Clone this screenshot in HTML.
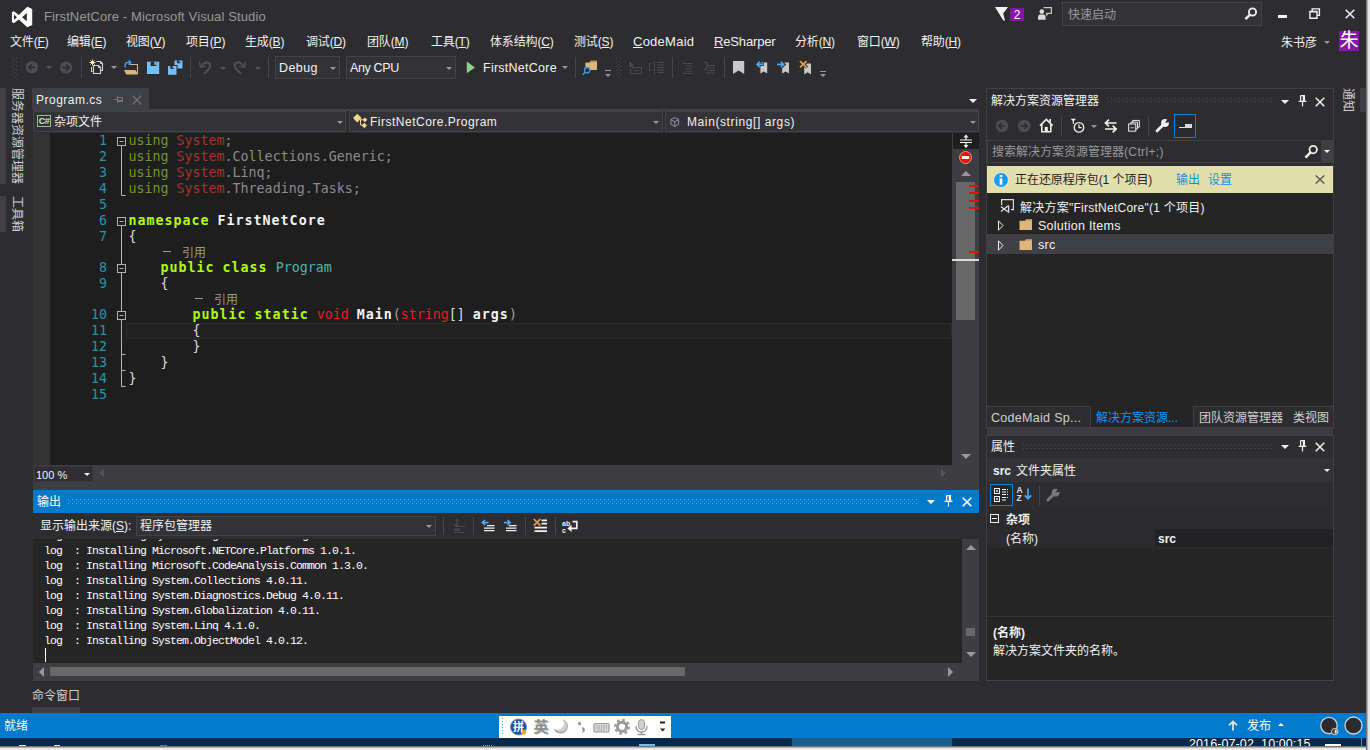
<!DOCTYPE html>
<html lang="zh-CN">
<head>
<meta charset="utf-8">
<title>FirstNetCore - Microsoft Visual Studio</title>
<style>
*{box-sizing:border-box;margin:0;padding:0}
html,body{width:1370px;height:750px;overflow:hidden;background:#2d2d30}
body{position:relative;font-family:"Liberation Sans","Noto Sans CJK SC",sans-serif;font-size:12px;color:#f1f1f1;line-height:1}
.a{position:absolute}
.t{position:absolute;white-space:nowrap;line-height:16px;height:16px}
u{text-decoration:underline;text-underline-offset:1px}
svg{position:absolute;overflow:visible}
.mono{font-family:"DejaVu Sans Mono","Noto Sans CJK SC",monospace}
.out{font-family:"Liberation Mono","Noto Sans CJK SC",monospace}
.combo{position:absolute;background:#333337;border:1px solid #434346}
.dd{position:absolute;width:0;height:0;border-left:3px solid transparent;border-right:3px solid transparent;border-top:3px solid #999}
.grip{position:absolute;height:5px;background-image:radial-gradient(circle at 0.5px 0.5px,#46464a 0.6px,transparent 0.7px),radial-gradient(circle at 2.5px 2.5px,#46464a 0.6px,transparent 0.7px);background-size:4px 4px}
.m{top:34px;letter-spacing:-0.15px}
.sep{position:absolute;top:57px;width:1px;height:21px;background:#46464a}
.vgrip{background-image:radial-gradient(circle at 1px 1px,#46464a 0.7px,transparent 0.9px),radial-gradient(circle at 3px 3px,#46464a 0.7px,transparent 0.9px);background-size:4px 4px}
.vt{transform-origin:0 0;transform:rotate(90deg);color:#d0d0d0}
.ln{left:51px;width:56px;text-align:right;color:#2b91af;font-size:13.3px}
.cd{left:128.5px;font-size:13.3px;color:#dcdcdc;white-space:pre}
.cd b,.cd .k{font-weight:bold;letter-spacing:1px}
.k{color:#b1fa18}.w{color:#f4f4f4}.ku{color:#6f972b}.nu{color:#a83232}.g{color:#8c8c8c}.r{color:#e02020}.ty{color:#4fb4ae}.p{color:#a4a4a4}
.cl{color:#999;font-size:12px;font-family:"DejaVu Sans Mono","Noto Sans CJK SC",monospace}
.gb{background-image:radial-gradient(circle at 0.5px 0.5px,#5fb0e6 0.6px,transparent 0.7px),radial-gradient(circle at 2.5px 2.5px,#5fb0e6 0.6px,transparent 0.7px)}
.ol{left:11px;font-size:11.5px;letter-spacing:-0.9px;color:#fff;line-height:15px;height:15px;white-space:pre}
</style>
</head>
<body>
<svg width="0" height="0" style="left:0;top:0"><defs>
<pattern id="pg" width="4" height="4" patternUnits="userSpaceOnUse"><rect x="0" y="0" width="1" height="1" fill="#4a4a50"/><rect x="2" y="2" width="1" height="1" fill="#4a4a50"/></pattern>
<pattern id="pb" width="4" height="4" patternUnits="userSpaceOnUse"><rect x="0" y="0" width="1" height="1" fill="#59a8de"/><rect x="2" y="2" width="1" height="1" fill="#59a8de"/></pattern>
</defs></svg>
<!-- SECTION:TITLE -->
<svg class="a" style="left:0;top:0" width="40" height="32" viewBox="0 0 40 32"><path fill="#fff" fill-rule="evenodd" d="M27.300,6.800 L32.200,9 L32.200,25.100 L27.300,27.300 L18.900,19.400 L13.800,23.200 L11.900,22.100 L11.900,12.300 L13.800,11.200 L18.900,15 Z M26.800,13 L22.100,17.150 L26.800,21.300 Z M14,14.500 L16.900,17.200 L14,19.900 Z"/></svg>
<div class="t" id="ttl" style="left:44px;top:9px;font-size:13px;color:#999;letter-spacing:0.12px">FirstNetCore - Microsoft Visual Studio</div>
<!-- flag + badge -->
<svg style="left:994px;top:6px" width="16" height="16" viewBox="0 0 16 16"><path fill="#f1f1f1" d="M1,1 L14,1 L9.2,7.5 L11,14.5 L9.3,14.5 Z"/></svg>
<div class="a" style="left:1010px;top:8px;width:14px;height:13px;background:#8417a8"></div>
<div class="t" style="left:1010px;top:7px;width:14px;text-align:center;font-size:12px;color:#fff">2</div>
<svg style="left:1037px;top:6px" width="18" height="16" viewBox="0 0 18 16"><path fill="none" stroke="#c8c8c8" stroke-width="1.2" d="M6.5,1.6 H14.4 V7.4 H11.2 L9.8,9 V7.4 H9"/><circle cx="4.8" cy="5.6" r="2.3" fill="#dcdcdc"/><path fill="#dcdcdc" d="M1,13.8 V11 Q1,8.6 3.4,8.6 H6.2 Q8.6,8.6 8.6,11 V13.8 Z"/></svg>
<div class="a" style="left:1062px;top:2px;width:200px;height:24px;background:#333337;border:1px solid #434346"></div>
<div class="t" style="left:1068px;top:7px;color:#999">快速启动</div>
<svg style="left:1243px;top:6px" width="16" height="16" viewBox="0 0 16 16"><circle cx="9.5" cy="6" r="3.6" fill="none" stroke="#f1f1f1" stroke-width="1.8"/><path stroke="#f1f1f1" stroke-width="2.4" d="M6.8,8.8 L2.4,13.2"/></svg>
<div class="a" style="left:1278px;top:15px;width:9px;height:3px;background:#f1f1f1"></div>
<svg style="left:1309px;top:8px" width="12" height="12" viewBox="0 0 12 12"><path fill="none" stroke="#f1f1f1" stroke-width="1.4" d="M3.2,3 V0.9 H10.4 V7.4 H8.2 M0.9,3.4 H8 V10.2 H0.9 Z"/><path stroke="#f1f1f1" stroke-width="1" d="M0.9,4 H8"/></svg>
<svg style="left:1345px;top:9px" width="10" height="10" viewBox="0 0 10 10"><path stroke="#f1f1f1" stroke-width="1.5" d="M0.7,0.7 L9.3,9.3 M9.3,0.7 L0.7,9.3"/></svg>
<!-- SECTION:MENU -->
<div class="t m" style="left:10px">文件(<u>F</u>)</div>
<div class="t m" style="left:67px">编辑(<u>E</u>)</div>
<div class="t m" style="left:126px">视图(<u>V</u>)</div>
<div class="t m" style="left:186px">项目(<u>P</u>)</div>
<div class="t m" style="left:245px">生成(<u>B</u>)</div>
<div class="t m" style="left:306px">调试(<u>D</u>)</div>
<div class="t m" style="left:367px">团队(<u>M</u>)</div>
<div class="t m" style="left:431px">工具(<u>T</u>)</div>
<div class="t m" style="left:490px">体系结构(<u>C</u>)</div>
<div class="t m" style="left:574px">测试(<u>S</u>)</div>
<div class="t m" style="left:633px;font-size:13px;letter-spacing:0.25px"><u>C</u>odeMaid</div>
<div class="t m" style="left:714px;font-size:13px;letter-spacing:-0.15px"><u>R</u>eSharper</div>
<div class="t m" style="left:795px">分析(<u>N</u>)</div>
<div class="t m" style="left:857px">窗口(<u>W</u>)</div>
<div class="t m" style="left:921px">帮助(<u>H</u>)</div>
<div class="t" style="left:1281px;top:35px">朱书彦</div>
<div class="dd" style="left:1324px;top:41px"></div>
<div class="a" style="left:1339px;top:31px;width:20px;height:20px;background:#8417a8"></div>
<div class="t" style="left:1339px;top:31px;width:20px;height:20px;line-height:20px;text-align:center;font-size:19px;color:#fff">朱</div>
<!-- SECTION:TOOLBAR -->
<svg style="left:12px;top:58px" width="5" height="20"><rect width="5" height="20" fill="url(#pg)"/></svg>
<svg style="left:24px;top:59px" width="52" height="16" viewBox="0 0 52 16"><g fill="#4f4a55"><circle cx="8" cy="8.3" r="6.2"/><circle cx="42" cy="8.6" r="6.2"/></g><g stroke="#2d2d30" stroke-width="1.6" fill="none"><path d="M11.5,8.3 H5 M7.8,5.3 L4.8,8.3 L7.8,11.3"/><path d="M38.5,8.6 H45 M42.2,5.6 L45.2,8.6 L42.2,11.6"/></g></svg>
<div class="dd" style="left:46px;top:66px;border-top-color:#55555a"></div>
<div class="sep" style="left:81px"></div>
<!-- new project -->
<svg style="left:89px;top:59px" width="16" height="16" viewBox="0 0 16 16"><path fill="none" stroke="#d4d4d4" stroke-width="1.100" d="M7.500,2.500 H11.500 L13.500,4.500 V11.500 H12 M2.500,8 V12.500 H3.500"/><path fill="#2d2d30" stroke="#d4d4d4" stroke-width="1.100" d="M4.500,6.500 H9.500 L11.500,8.500 V14.500 H4.500 Z"/><path fill="none" stroke="#d4d4d4" stroke-width="1" d="M9.500,6.500 V8.500 H11.500 M11.500,2.500 V4.500 H13.500"/><path stroke="#f7d98a" stroke-width="1" d="M3.500,0.500 V6.500 M0.500,3.500 H6.500 M1.400,1.400 L5.600,5.600 M5.600,1.400 L1.400,5.600"/><circle cx="3.500" cy="3.500" r="1.400" fill="#fff4c8"/></svg>
<div class="dd" style="left:111px;top:66px"></div>
<!-- open -->
<svg style="left:123px;top:59px" width="16" height="16" viewBox="0 0 16 16"><path fill="none" stroke="#dcb67a" stroke-width="1.1" d="M6.5,5.5 H14.5 V15"/><path fill="#dcb67a" d="M1,11 H12.5 L14.8,15.6 H3.2 Z"/><path fill="none" stroke="#3a9bea" stroke-width="1.5" d="M2.2,8.4 V5.6 Q2.2,3.4 4.6,3.4 H7.6 M5.6,1.2 L7.9,3.4 L5.6,5.7"/></svg>
<!-- save -->
<svg style="left:146px;top:59px" width="16" height="16" viewBox="0 0 16 16"><path fill="#75beff" d="M1,2.700 H13.200 V15 H1 Z"/><path fill="#2d2d30" d="M4.600,2.700 H10.400 V7 H4.600 Z"/><path fill="#75beff" d="M8.300,2.700 H10.400 V5.800 H8.300 Z"/></svg>
<!-- save all -->
<svg style="left:167px;top:59px" width="17" height="17" viewBox="0 0 17 17"><path fill="#75beff" d="M7.500,1.500 H15.500 V9.500 H7.500 Z"/><path fill="#2d2d30" d="M10,1.500 H13.500 V4.200 H10 Z"/><path fill="#75beff" d="M12.200,1.500 H13.500 V3.400 H12.200 Z"/><path fill="#2d2d30" d="M0,6 H10.500 V17 H0 Z"/><path fill="#75beff" d="M1,7 H9.500 V15.800 H1 Z"/><path fill="#2d2d30" d="M3.300,7 H7 V9.800 H3.300 Z"/><path fill="#75beff" d="M5.700,7 H7 V9 H5.700 Z"/></svg>
<div class="sep" style="left:190px"></div>
<!-- undo / redo (disabled) -->
<svg style="left:198px;top:59px" width="64" height="17" viewBox="0 0 64 17"><g fill="none" stroke="#544d59" stroke-width="2.1"><path d="M3.4,7.2 Q8.2,1.2 11.6,4.6 Q14.4,8 6,14.6"/><path d="M1.4,2.6 L2.4,8.2 L8,7.4" stroke-width="1.4"/><path d="M45.6,7.2 Q40.800000000000004,1.2 37.4,4.6 Q34.6,8 43,14.6"/><path d="M47.6,2.6 L46.6,8.2 L41,7.4" stroke-width="1.4"/></g></svg>
<div class="dd" style="left:220px;top:67px;border-top-color:#55555a"></div>
<div class="dd" style="left:255px;top:67px;border-top-color:#55555a"></div>
<div class="sep" style="left:268px"></div>
<div class="combo" style="left:275px;top:56px;width:65px;height:23px"></div>
<div class="t" style="left:279px;top:60px;font-size:12.5px;letter-spacing:0.4px">Debug</div>
<div class="dd" style="left:330px;top:67px"></div>
<div class="combo" style="left:346px;top:56px;width:110px;height:23px"></div>
<div class="t" style="left:350px;top:60px;font-size:12.5px;letter-spacing:-0.35px">Any CPU</div>
<div class="dd" style="left:446px;top:67px"></div>
<svg style="left:466px;top:61px" width="10" height="13" viewBox="0 0 10 13"><path fill="#8dd28a" d="M0.8,0.6 L9,6.4 L0.8,12.2 Z"/></svg>
<div class="t" style="left:483px;top:60px;font-size:12.5px;letter-spacing:0.25px">FirstNetCore</div>
<div class="dd" style="left:562px;top:66px"></div>
<div class="sep" style="left:575px"></div>
<!-- find in files -->
<svg style="left:582px;top:59px" width="17" height="17" viewBox="0 0 17 17"><path fill="#dcb67a" d="M3.4,3.4 H7.6 L8.8,1.8 H15 V11 H3.4 Z"/><path fill="#b8905a" d="M8.8,1.8 H15 V3.2 H8.2 Z"/><circle cx="5.2" cy="11.2" r="2.7" fill="#2d2d30" stroke="#3a9bea" stroke-width="1.3"/><path stroke="#3a9bea" stroke-width="1.6" d="M3.4,13.2 L0.8,15.8"/></svg>
<div class="a" style="left:605px;top:70px;width:6px;height:1px;background:#999"></div>
<div class="dd" style="left:605px;top:74px"></div>
<svg style="left:616px;top:58px" width="5" height="20"><rect width="5" height="20" fill="url(#pg)"/></svg>
<!-- dim icons -->
<svg style="left:628px;top:60px" width="90" height="16" viewBox="0 0 90 16"><g fill="none" stroke="#4d4652" stroke-width="1.1"><path d="M4.5,7.5 H13.5 V13.5 H2.5 V9"/><path d="M5.5,10.5 H11"/><path d="M23.5,3.5 H21.5 V10.5 H23.5 M26.5,1 V15"/><path d="M29,2.500 H36 M29,5 H36 M29,7.500 H36 M29,10 H36 M29,12.500 H36"/><path d="M54.500,3.500 H64 M57.500,6 H64 M57.500,8.500 H64 M57.500,11 H64 M54.500,13.500 H64"/><path d="M80,5.500 H87 M80,8 H87 M80,10.500 H87 M78,13 H87"/><path d="M75.600,2.200 Q79.800,1.600 79.600,4.800 Q79.200,7.600 76.600,10.200" stroke-width="1.3"/></g><path fill="#4d4652" d="M1,1 L1.600,8 L3.400,6.400 L4.800,9 L5.800,8.400 L4.600,6 L6.800,5.600 Z"/></svg>
<div class="sep" style="left:672px"></div>
<div class="sep" style="left:724px"></div>
<!-- bookmarks -->
<svg style="left:732px;top:60px" width="82" height="16" viewBox="0 0 82 16"><g fill="#c8c8c8"><path d="M1,1 H12.200 V14 L6.600,10.600 L1,14 Z"/><path d="M28.400,2.600 H35.200 V13.600 L31.800,11.400 L28.400,13.600 Z"/><path d="M50.200,2.600 H57 V13.600 L53.600,11.400 L50.200,13.600 Z"/><path d="M72.200,3.600 H79 V14.400 L75.600,12.200 L72.200,14.400 Z"/></g><g fill="none" stroke="#2d2d30" stroke-width="3.200"><path d="M32,4.400 H25.500 M27.800,1.600 L25,4.400 L27.800,7.200"/><path d="M45,4.400 H51.500 M49.200,1.600 L52,4.400 L49.200,7.200"/><path d="M68,1.200 L75,7.400 M75,1.200 L68,7.400"/></g><g fill="none" stroke="#49a8f5" stroke-width="1.600"><path d="M31.600,4.400 H25.500 M27.800,1.600 L25,4.400 L27.800,7.200"/><path d="M45,4.400 H51.100 M48.800,1.600 L51.600,4.400 L48.800,7.200"/></g><path fill="none" stroke="#e8a24a" stroke-width="1.600" d="M68,1.200 L74.600,7.400 M74.600,1.200 L68,7.400"/></svg>
<div class="a" style="left:820px;top:71px;width:6px;height:1px;background:#999"></div>
<div class="dd" style="left:820px;top:74px"></div>
<!-- SECTION:LEFT -->
<div class="a" style="left:0;top:88px;width:6px;height:96px;background:#3f3f46"></div>
<div class="a" style="left:0;top:196px;width:6px;height:36px;background:#3f3f46"></div>
<div class="t vt" style="left:25px;top:88px">服务器资源管理器</div>
<div class="t vt" style="left:25px;top:196px">工具箱</div>
<!-- SECTION:EDITOR -->
<div class="a" style="left:32px;top:88px;width:117px;height:21px;background:#3f3f46"></div>
<div class="t" style="left:36px;top:92px;letter-spacing:0.5px">Program.cs</div>
<svg style="left:114px;top:94.5px" width="9" height="9" viewBox="0 0 9 9"><path fill="none" stroke="#77777c" stroke-width="1" d="M0,4.500 H3.500 M3.500,1 V8 M3.500,2.500 H8.500 V6.500 H3.500 M3.500,5.500 H8.500"/></svg>
<svg style="left:132px;top:94.5px" width="10" height="10" viewBox="0 0 10 10"><path stroke="#77777c" stroke-width="1.200" d="M0.700,0.700 L9.300,9.300 M9.300,0.700 L0.700,9.300"/></svg>
<div class="a" style="left:33px;top:109px;width:946px;height:2px;background:#3f3f46"></div>
<div class="a" style="left:969px;top:99px;width:0;height:0;border-left:4px solid transparent;border-right:4px solid transparent;border-top:4px solid #f1f1f1"></div>
<div class="a" style="left:33px;top:111px;width:946px;height:22px;background:#2d2d30"></div>
<div class="combo" style="left:33px;top:111px;width:313px;height:21px"></div>
<div class="combo" style="left:349px;top:111px;width:314px;height:21px"></div>
<div class="combo" style="left:665px;top:111px;width:314px;height:21px"></div>
<div class="a" style="left:37px;top:115px;width:14px;height:12px;border:1px solid #8cc88c"></div><div class="t" style="left:37px;top:113px;width:14px;text-align:center;font-size:9px;font-weight:bold;color:#e0e0e0;letter-spacing:-0.4px">C#</div>
<div class="t" style="left:54px;top:114px">杂项文件</div>
<div class="dd" style="left:337px;top:121px"></div>
<svg style="left:352px;top:113px" width="16" height="16" viewBox="0 0 16 16"><path fill="#f5d58f" d="M5.300,0.800 L9.600,5.100 L5.300,9.400 L1,5.100 Z M12.900,4.400 L15.300,6.800 L12.900,9.200 L10.500,6.800 Z M12.300,9.800 L15,12.500 L12.300,15.200 L9.600,12.500 Z"/><path fill="none" stroke="#f5d58f" stroke-width="1" d="M8,6.800 H11 M8.500,6.800 V12 H10.500"/></svg>
<div class="t" style="left:370px;top:114px;letter-spacing:0.5px">FirstNetCore.Program</div>
<div class="dd" style="left:653px;top:121px"></div>
<svg style="left:669.5px;top:116.5px" width="9.5" height="10" viewBox="0 0 12 13"><path fill="none" stroke="#b8a0d8" stroke-width="1" d="M6,0.800 L11,3.400 V9.400 L6,12.200 L1,9.400 V3.400 Z M1,3.400 L6,6.200 L11,3.400 M6,6.200 V12.200"/></svg>
<div class="t" style="left:687px;top:114px;letter-spacing:0.6px">Main(string[] args)</div>
<div class="dd" style="left:970px;top:121px"></div>
<div class="a" style="left:33px;top:133px;width:919px;height:332px;background:#1e1e1e"></div>
<div class="a" style="left:33px;top:133px;width:17px;height:332px;background:#333333"></div>
<div class="a" style="left:126px;top:323px;width:826px;height:16px;border:1px solid #2c2c2c;background:#222222"></div>
<div class="t mono ln" style="top:133px">1</div>
<pre class="t mono cd" style="top:133px"><span class="ku">using</span> <span class="nu">System</span><span class="g">;</span></pre>
<div class="t mono ln" style="top:149px">2</div>
<pre class="t mono cd" style="top:149px"><span class="ku">using</span> <span class="nu">System</span><span class="g">.Collections.Generic;</span></pre>
<div class="t mono ln" style="top:165px">3</div>
<pre class="t mono cd" style="top:165px"><span class="ku">using</span> <span class="nu">System</span><span class="g">.Linq;</span></pre>
<div class="t mono ln" style="top:181px">4</div>
<pre class="t mono cd" style="top:181px"><span class="ku">using</span> <span class="nu">System</span><span class="g">.Threading.Tasks;</span></pre>
<div class="t mono ln" style="top:197px">5</div>
<div class="t mono ln" style="top:213px">6</div>
<pre class="t mono cd" style="top:213px"><span class="k">namespace</span> <b class="w">FirstNetCore</b></pre>
<div class="t mono ln" style="top:229px">7</div>
<pre class="t mono cd" style="top:229px">{</pre>
<div class="t mono ln" style="top:260px">8</div>
<pre class="t mono cd" style="top:260px">    <span class="k">public</span> <span class="k">class</span> <span class="ty">Program</span></pre>
<div class="t mono ln" style="top:276px">9</div>
<pre class="t mono cd" style="top:276px">    {</pre>
<div class="t mono ln" style="top:307px">10</div>
<pre class="t mono cd" style="top:307px">        <span class="k">public</span> <span class="k">static</span> <span class="r">void</span> <b class="w">Main</b><span class="p">(</span><span class="r">string</span>[] <b class="w">args</b><span class="p">)</span></pre>
<div class="t mono ln" style="top:323px">11</div>
<pre class="t mono cd" style="top:323px">        {</pre>
<div class="t mono ln" style="top:339px">12</div>
<pre class="t mono cd" style="top:339px">        }</pre>
<div class="t mono ln" style="top:355px">13</div>
<pre class="t mono cd" style="top:355px">    }</pre>
<div class="t mono ln" style="top:371px">14</div>
<pre class="t mono cd" style="top:371px">}</pre>
<div class="t mono ln" style="top:387px">15</div>
<div class="a" style="left:163px;top:251px;width:8px;height:1px;background:#9a9a9a"></div><div class="t cl" style="left:182px;top:245px">引用</div>
<div class="a" style="left:195px;top:298px;width:8px;height:1px;background:#9a9a9a"></div><div class="t cl" style="left:214px;top:292px">引用</div>
<svg style="left:115px;top:133px" width="14" height="260" viewBox="0 0 14 260"><g fill="none" stroke="#b4b4b4" stroke-width="1"><path d="M6.500,13 V62.500 H10.500"/><path d="M6.500,93 V253.500 H10.500 M6.500,221.500 H10.500 M6.500,237.500 H10.500"/></g><g fill="#1e1e1e" stroke="#b4b4b4" stroke-width="1"><rect x="2.500" y="4.500" width="8" height="8"/><path d="M4.500,8.500 H8.500"/><rect x="2.500" y="84.500" width="8" height="8"/><path d="M4.500,88.500 H8.500"/><rect x="2.500" y="131.500" width="8" height="8"/><path d="M4.500,135.500 H8.500"/><rect x="2.500" y="178.500" width="8" height="8"/><path d="M4.500,182.500 H8.500"/></g></svg>
<div class="a" style="left:952px;top:133px;width:27px;height:332px;background:#3e3e42"></div>
<div class="a" style="left:953px;top:133px;width:26px;height:16px;background:#1e1e1e"></div>
<svg style="left:958px;top:134px" width="16" height="14" viewBox="0 0 16 14"><path fill="none" stroke="#f1f1f1" stroke-width="1.200" d="M2,6 H14 M2,8.500 H14 M8,1 V5.500 M8,9 V13.500"/><path fill="#f1f1f1" d="M5.500,3.500 L8,0.500 L10.500,3.500 Z M5.500,11 L8,14 L10.500,11 Z"/></svg>
<svg style="left:959px;top:151px" width="13" height="13" viewBox="0 0 13 13"><circle cx="6.500" cy="6.500" r="6" fill="#e51400" stroke="#f0b0a8" stroke-width="0.800"/><rect x="2.800" y="5" width="7.400" height="3" fill="#fff"/></svg>
<div class="a" style="left:961px;top:171px;width:0;height:0;border-left:5px solid transparent;border-right:5px solid transparent;border-bottom:5px solid #999"></div>
<div class="a" style="left:956px;top:182px;width:19px;height:138px;background:#686868"></div>
<div class="a" style="left:969px;top:185px;width:10px;height:2px;background:#e51400"></div>
<div class="a" style="left:969px;top:192px;width:10px;height:2px;background:#e51400"></div>
<div class="a" style="left:969px;top:200px;width:10px;height:2px;background:#e51400"></div>
<div class="a" style="left:969px;top:207px;width:10px;height:2px;background:#e51400"></div>
<div class="a" style="left:969px;top:251px;width:10px;height:2px;background:#e51400"></div>
<div class="a" style="left:952px;top:259px;width:27px;height:2px;background:#dcdcdc"></div>
<div class="a" style="left:961px;top:454px;width:0;height:0;border-left:5px solid transparent;border-right:5px solid transparent;border-top:5px solid #999"></div>
<div class="a" style="left:33px;top:465px;width:946px;height:25px;background:#3e3e42"></div>
<div class="a" style="left:34px;top:466px;width:59px;height:16px;background:#2f2f33;border:1px solid #38383c"></div>
<div class="t" style="left:36px;top:466.5px;font-size:11px">100 %</div>
<div class="dd" style="left:84px;top:473px;border-top-color:#f1f1f1"></div>
<div class="a" style="left:99px;top:469px;width:0;height:0;border-top:4.5px solid transparent;border-bottom:4.5px solid transparent;border-right:5px solid #5a5060"></div>
<div class="a" style="left:941px;top:469px;width:0;height:0;border-top:4px solid transparent;border-bottom:4px solid transparent;border-left:5px solid #5a5060"></div>
<!-- SECTION:OUTPUT -->
<div class="a" style="left:33px;top:490px;width:946px;height:23px;background:#007acc"></div>
<div class="t" style="left:37px;top:494px;color:#fff">输出</div>
<svg style="left:68px;top:499px" width="850" height="5"><rect width="850" height="5" fill="url(#pb)"/></svg>
<div class="a" style="left:927px;top:500px;width:0;height:0;border-left:4px solid transparent;border-right:4px solid transparent;border-top:4px solid #fff"></div>
<svg style="left:944px;top:495px" width="9" height="12" viewBox="0 0 9 12"><path fill="none" stroke="#fff" stroke-width="1.2" d="M2.600,0.600 H6.400 V6 M2.600,0.600 V6 M5.400,0.600 V6 M0.600,6.400 H8.400 M4.500,6.400 V11.500"/></svg>
<svg style="left:962px;top:497px" width="10" height="10" viewBox="0 0 10 10"><path stroke="#fff" stroke-width="1.600" d="M0.700,0.700 L9.300,9.300 M9.300,0.700 L0.700,9.300"/></svg>
<div class="t" style="left:40px;top:518px">显示输出来源(<u>S</u>):</div>
<div class="combo" style="left:136px;top:516px;width:300px;height:20px"></div>
<div class="t" style="left:140px;top:518px">程序包管理器</div>
<div class="dd" style="left:426px;top:525px"></div>
<div class="sep" style="left:443px;top:517px;height:18px"></div>
<div class="sep" style="left:473px;top:517px;height:18px"></div>
<div class="sep" style="left:525px;top:517px;height:18px"></div>
<div class="sep" style="left:555px;top:517px;height:18px"></div>
<svg style="left:451px;top:518px" width="16" height="16" viewBox="0 0 16 16"><g fill="none" stroke="#4d4652" stroke-width="1.200"><path d="M5.500,1.500 V8 M2.800,5.600 L5.500,8.300 L8.200,5.600 M5.600,1.500 Q8,1.500 8.200,3.500"/><path d="M4,8.500 H14 M3,14.500 H13"/></g><rect x="3" y="10.500" width="6" height="2.400" fill="#4d4652"/></svg>
<svg style="left:481px;top:518px" width="36" height="16" viewBox="0 0 36 16"><g stroke="#f1f1f1" stroke-width="1.300"><path d="M6,7.600 H13.500 M3,10.100 H13.500 M3,12.600 H13.500"/><path d="M28,7.600 H35.500 M25,10.100 H35.500 M25,12.600 H35.500"/></g><g fill="none" stroke="#49a8f5" stroke-width="1.600"><path d="M7.500,4.600 H1.500 M4,2 L1.300,4.600 L4,7.200"/><path d="M23,4.600 H29 M26.500,2 L29.200,4.600 L26.500,7.200"/></g></svg>
<svg style="left:533px;top:518px" width="16" height="16" viewBox="0 0 16 16"><path stroke="#f1f1f1" stroke-width="1.700" d="M8.500,2.400 H14 M8.500,5.600 H14 M1.500,9.600 H14 M1.500,13.200 H14"/><path stroke="#e8a24a" stroke-width="1.600" d="M0.800,1 L7.400,7.600 M7.400,1 L0.800,7.600"/></svg>
<svg style="left:562px;top:519px" width="17" height="14" viewBox="0 0 17 14"><path fill="none" stroke="#f1f1f1" stroke-width="1.700" d="M10.500,2.600 H14.800 V9.400 H8"/><path fill="#f1f1f1" d="M5.400,9.400 L9.600,5.800 V13 Z"/></svg>
<div class="t" style="left:562px;top:519.5px;font-size:7px;line-height:7px;height:14px;white-space:pre;color:#f1f1f1;font-weight:bold">ab
c</div>
<div class="a" style="left:33px;top:539px;width:929px;height:124px;background:#252526"></div>
<div class="a" style="left:33px;top:539px;width:929px;height:124px;overflow:hidden">
<pre class="t out ol" style="top:-11px">log  : Installing System.Diagnostics.Tracing 4.1.0.</pre>
<pre class="t out ol" style="top:4px">log  : Installing Microsoft.NETCore.Platforms 1.0.1.</pre>
<pre class="t out ol" style="top:19px">log  : Installing Microsoft.CodeAnalysis.Common 1.3.0.</pre>
<pre class="t out ol" style="top:34px">log  : Installing System.Collections 4.0.11.</pre>
<pre class="t out ol" style="top:49px">log  : Installing System.Diagnostics.Debug 4.0.11.</pre>
<pre class="t out ol" style="top:64px">log  : Installing System.Globalization 4.0.11.</pre>
<pre class="t out ol" style="top:79px">log  : Installing System.Linq 4.1.0.</pre>
<pre class="t out ol" style="top:94px">log  : Installing System.ObjectModel 4.0.12.</pre>
</div>
<div class="a" style="left:45px;top:648px;width:1px;height:14px;background:#fff"></div>
<div class="a" style="left:962px;top:539px;width:17px;height:124px;background:#3e3e42"></div>
<div class="a" style="left:966px;top:545px;width:0;height:0;border-left:5px solid transparent;border-right:5px solid transparent;border-bottom:5px solid #999"></div>
<div class="a" style="left:966px;top:628px;width:9px;height:8px;background:#686868"></div>
<div class="a" style="left:966px;top:652px;width:0;height:0;border-left:5px solid transparent;border-right:5px solid transparent;border-top:5px solid #999"></div>
<div class="a" style="left:33px;top:663px;width:946px;height:18px;background:#3e3e42"></div>
<div class="a" style="left:39px;top:667px;width:0;height:0;border-top:5px solid transparent;border-bottom:5px solid transparent;border-right:5px solid #999"></div>
<div class="a" style="left:50px;top:667px;width:635px;height:9px;background:#686868"></div>
<div class="a" style="left:948px;top:667px;width:0;height:0;border-top:5px solid transparent;border-bottom:5px solid transparent;border-left:5px solid #999"></div>
<div class="t" style="left:32px;top:688px;color:#d0d0d0">命令窗口</div>
<div class="a" style="left:32px;top:707px;width:48px;height:6px;background:#3f3f46"></div>
<!-- SECTION:SOLUTION -->
<div class="a" style="left:986px;top:88px;width:348px;height:340px;border:1px solid #3f3f46;background:#2d2d30"></div>
<div class="t" style="left:991px;top:93px">解决方案资源管理器</div>
<svg style="left:1107px;top:98px" width="166" height="5"><rect width="166" height="5" fill="url(#pg)"/></svg>
<div class="a" style="left:1281px;top:100px;width:0;height:0;border-left:4px solid transparent;border-right:4px solid transparent;border-top:4px solid #f1f1f1"></div>
<svg style="left:1298px;top:95px" width="9" height="12" viewBox="0 0 9 12"><path fill="none" stroke="#f1f1f1" stroke-width="1.2" d="M2.600,0.600 H6.400 V6 M2.600,0.600 V6 M5.400,0.600 V6 M0.600,6.400 H8.400 M4.500,6.400 V11.500"/></svg>
<svg style="left:1315px;top:97px" width="10" height="10" viewBox="0 0 10 10"><path stroke="#f1f1f1" stroke-width="1.500" d="M0.700,0.700 L9.300,9.300 M9.300,0.700 L0.700,9.300"/></svg>
<svg style="left:994px;top:118px" width="40" height="16" viewBox="0 0 40 16"><g fill="#4f4a55"><circle cx="8" cy="8" r="6.200"/><circle cx="30" cy="8" r="6.200"/></g><g stroke="#2d2d30" stroke-width="1.600" fill="none"><path d="M11.500,8 H5 M7.800,5 L4.800,8 L7.800,11"/><path d="M26.500,8 H33 M30.200,5 L33.200,8 L30.200,11"/></g></svg>
<svg style="left:1039px;top:118px" width="15" height="15" viewBox="0 0 15 15"><path fill="none" stroke="#f1f1f1" stroke-width="1.500" d="M1,7.600 L7.300,1.400 L13.600,7.600 M2.800,6.600 V13.800 H11.800 V6.600"/><path fill="#f1f1f1" d="M5.800,9 H8.800 V14 H5.800 Z M10.400,1 H12 V4 H10.400 Z"/></svg>
<div class="sep" style="left:1061px;top:116px;height:20px"></div>
<svg style="left:1070px;top:118px" width="16" height="16" viewBox="0 0 16 16"><circle cx="9" cy="9.400" r="4.800" fill="none" stroke="#f1f1f1" stroke-width="1.300"/><path fill="none" stroke="#f1f1f1" stroke-width="1.200" d="M9,6.400 V9.600 H11.600"/><path fill="#f1f1f1" d="M0.600,0.800 H6 L3.300,3.600 Z"/><path stroke="#f1f1f1" stroke-width="1.100" d="M3.300,3 V6"/></svg>
<div class="dd" style="left:1091px;top:125px"></div>
<svg style="left:1104px;top:118px" width="14" height="16" viewBox="0 0 14 16"><g fill="none" stroke="#f1f1f1" stroke-width="1.600"><path d="M1.600,5 H12.600 M5,1.600 L1.400,5 L5,8.400"/><path d="M1,11 H12 M8.600,7.600 L12.200,11 L8.600,14.400"/></g></svg>
<svg style="left:1127.5px;top:119.5px" width="12" height="12.5" viewBox="0 0 13 14"><g fill="none" stroke="#f1f1f1" stroke-width="1.100"><path d="M5,2.500 V0.500 H12.500 V8 H10.500"/><path d="M3,4.500 V2.500 H10.500 V10 H8.500"/><rect x="0.500" y="4.500" width="8" height="8"/></g><path stroke="#49a8f5" stroke-width="1.400" d="M2.200,8.600 H6.800"/></svg>
<div class="sep" style="left:1148px;top:116px;height:20px"></div>
<svg style="left:1155px;top:118px" width="15" height="15" viewBox="0 0 15 15"><path fill="none" stroke="#f1f1f1" stroke-width="2.800" stroke-linecap="round" d="M2,13 L8.200,6.800"/><circle cx="10" cy="5" r="3.900" fill="#f1f1f1"/><path fill="#2d2d30" d="M10,5 L13.200,-0.400 L16.400,3.400 Z"/></svg>
<div class="a" style="left:1174px;top:114px;width:22px;height:24px;border:1px solid #0a84d8;background:#2a2a2d"></div>
<div class="a" style="left:1179px;top:127px;width:13px;height:1px;background:#e4e4e4"></div><div class="a" style="left:1185px;top:124px;width:7px;height:4px;background:#dadada"></div>
<div class="a" style="left:987px;top:140px;width:346px;height:23px;border:1px solid #3f3f46;background:#2d2d30"></div>
<div class="a" style="left:1321px;top:141px;width:12px;height:21px;background:#3f3f46"></div>
<div class="t" style="left:992px;top:144px;color:#999">搜索解决方案资源管理器<span style="letter-spacing:0.35px">(Ctrl+;)</span></div>
<svg style="left:1304px;top:144px" width="15" height="15" viewBox="0 0 15 15"><circle cx="9.200" cy="5.600" r="3.700" fill="none" stroke="#f1f1f1" stroke-width="1.800"/><path stroke="#f1f1f1" stroke-width="2.400" d="M6.600,8.400 L1.400,13.600"/></svg>
<div class="dd" style="left:1324px;top:150px;border-top-color:#f1f1f1"></div>
<div class="a" style="left:987px;top:166px;width:346px;height:27px;background:#e3dfad"></div>
<svg style="left:993px;top:172px" width="16" height="16" viewBox="0 0 16 16"><circle cx="8" cy="8" r="7.400" fill="#1b9bf0" stroke="#f4f4ea" stroke-width="0.800"/><rect x="6.700" y="6.400" width="2.600" height="6.400" fill="#fff"/><rect x="6.700" y="3" width="2.600" height="2.200" fill="#fff"/></svg>
<div class="t" style="left:1015px;top:172px;color:#1e1e1e;letter-spacing:-0.05px">正在还原程序包(1 个项目)</div>
<div class="t" style="left:1176px;top:172px;color:#0e8fe8">输出</div>
<div class="t" style="left:1208px;top:172px;color:#0e8fe8">设置</div>
<svg style="left:1315px;top:175px" width="10" height="9" viewBox="0 0 10 9"><path stroke="#555" stroke-width="1.400" d="M0.700,0.500 L9.300,8.500 M9.300,0.500 L0.700,8.500"/></svg>
<div class="a" style="left:987px;top:193px;width:346px;height:213px;background:#252526"></div>
<div class="a" style="left:987px;top:234px;width:346px;height:20px;background:#3f3f46"></div>
<svg style="left:1000px;top:198px" width="15" height="15" viewBox="0 0 15 15"><path fill="none" stroke="#dcdcdc" stroke-width="1.200" d="M1.600,7 V1.600 H13.400 V11.600 H11"/><path fill="none" stroke="#e4dcf2" stroke-width="1.300" d="M1,8.400 L4,11 L1,13.600 M8.600,7.600 V14 L4,11 L8.600,7.600"/></svg>
<div class="t" style="left:1020px;top:199.5px;letter-spacing:0.25px">解决方案"FirstNetCore"(1 个项目)</div>
<svg style="left:998px;top:220px" width="6" height="11" viewBox="0 0 6 11"><path fill="none" stroke="#f1f1f1" stroke-width="1" d="M0.500,0.800 L5,5.500 L0.500,10.200 Z"/></svg>
<svg style="left:1019px;top:218px" width="14" height="13" viewBox="0 0 14 13"><path fill="#dcb67a" d="M0.500,2.800 H6 L7.600,1 H13 V12 H0.500 Z"/><path fill="#b58f57" d="M7.600,1 H13 V2.400 H7 Z"/></svg>
<svg style="left:998px;top:240px" width="6" height="11" viewBox="0 0 6 11"><path fill="none" stroke="#f1f1f1" stroke-width="1" d="M0.500,0.800 L5,5.500 L0.500,10.200 Z"/></svg>
<svg style="left:1019px;top:238px" width="14" height="13" viewBox="0 0 14 13"><path fill="#dcb67a" d="M0.500,2.800 H6 L7.600,1 H13 V12 H0.500 Z"/><path fill="#b58f57" d="M7.600,1 H13 V2.400 H7 Z"/></svg>
<div class="t" style="left:1038px;top:218px;font-size:12.5px;letter-spacing:0.25px">Solution Items</div>
<div class="t" style="left:1038px;top:237.3px;font-size:12.5px;letter-spacing:0.25px">src</div>
<div class="a" style="left:987px;top:406px;width:346px;height:1px;background:#3f3f46"></div>
<div class="a" style="left:1090px;top:406px;width:104px;height:22px;background:#252526;border:1px solid #3f3f46;border-top:none"></div>
<div class="t" style="left:991px;top:410px;font-size:12.5px;letter-spacing:0.3px;color:#d0d0d0">CodeMaid Sp...</div>
<div class="t" style="left:1096px;top:410px;color:#0e97f5">解决方案资源...</div>
<div class="t" style="left:1199px;top:410px;color:#d0d0d0">团队资源管理器</div>
<div class="t" style="left:1293px;top:410px;color:#d0d0d0">类视图</div>
<div class="a" style="left:987px;top:428px;width:346px;height:7px;background:#3c3c41"></div>
<div class="t vt" style="left:1356px;top:88px">通知</div>
<div class="a" style="left:1360px;top:88px;width:6px;height:24px;background:#3f3f46"></div>
<!-- SECTION:PROPS -->
<div class="a" style="left:986px;top:435px;width:348px;height:246px;border:1px solid #3f3f46;background:#252526"></div>
<div class="a" style="left:987px;top:436px;width:346px;height:72px;background:#2d2d30"></div>
<div class="t" style="left:991px;top:439px">属性</div>
<svg style="left:1023px;top:444px" width="250" height="5"><rect width="250" height="5" fill="url(#pg)"/></svg>
<div class="a" style="left:1281px;top:445px;width:0;height:0;border-left:4px solid transparent;border-right:4px solid transparent;border-top:4px solid #f1f1f1"></div>
<svg style="left:1298px;top:440px" width="9" height="12" viewBox="0 0 9 12"><path fill="none" stroke="#f1f1f1" stroke-width="1.2" d="M2.600,0.600 H6.400 V6 M2.600,0.600 V6 M5.400,0.600 V6 M0.600,6.400 H8.400 M4.500,6.400 V11.500"/></svg>
<svg style="left:1315px;top:442px" width="10" height="10" viewBox="0 0 10 10"><path stroke="#f1f1f1" stroke-width="1.500" d="M0.700,0.700 L9.300,9.300 M9.300,0.700 L0.700,9.300"/></svg>
<div class="a" style="left:987px;top:458px;width:346px;height:24px;background:#333337"></div>
<div class="t" style="left:993px;top:463px"><b>src</b></div><div class="t" style="left:1016px;top:463px">文件夹属性</div>
<div class="dd" style="left:1324px;top:469px;border-top-color:#f1f1f1"></div>
<div class="a" style="left:990px;top:484px;width:23px;height:22px;border:1px solid #0a84d8;background:#27272a"></div>
<svg style="left:993px;top:487px" width="17" height="16" viewBox="0 0 17 16"><g fill="none" stroke="#f1f1f1" stroke-width="1"><rect x="1.500" y="1.500" width="5" height="5"/><rect x="1.500" y="9.500" width="5" height="5"/><path d="M3,4 H5 M4,3 V5 M3,12 H5 M4,11 V13"/><path d="M9,2.500 H15 M9,5 H15 M9,7.500 H15 M9,10.500 H15 M9,13 H13" stroke-dasharray="4 1"/></g></svg>
<div class="t" style="left:1016.5px;top:487px;font-size:8.500px;line-height:7.500px;height:16px;font-weight:bold;white-space:pre;color:#e0e0e0">A
Z</div>
<svg style="left:1024px;top:488px" width="8" height="13" viewBox="0 0 8 13"><path fill="none" stroke="#49a8f5" stroke-width="1.700" d="M4,0.500 V10.500 M0.800,7.400 L4,10.800 L7.200,7.400"/></svg>
<div class="sep" style="left:1039px;top:486px;height:19px"></div>
<svg style="left:1046px;top:488px" width="15" height="14" viewBox="0 0 15 14"><path fill="none" stroke="#77777b" stroke-width="3" stroke-linecap="round" d="M2,12 L7.600,6.400"/><circle cx="9.600" cy="4.600" r="3.900" fill="#77777b"/><path fill="#2d2d30" d="M9.600,4.600 L12.600,-0.600 L15.600,3 Z"/></svg>
<div class="a" style="left:987px;top:508px;width:346px;height:40px;background:#2b2b2e"></div>
<div class="a" style="left:990px;top:514px;width:9px;height:9px;border:1px solid #f1f1f1"></div><div class="a" style="left:992px;top:518px;width:5px;height:1px;background:#f1f1f1"></div>
<div class="t" style="left:1006px;top:512px"><b>杂项</b></div>
<div class="t" style="left:1006px;top:531px">(名称)</div>
<div class="a" style="left:1155px;top:529px;width:178px;height:18px;background:#222224"></div>
<div class="t" style="left:1158px;top:531px"><b>src</b></div>
<div class="a" style="left:987px;top:616px;width:346px;height:1px;background:#333337"></div>
<div class="t" style="left:993px;top:625px"><b>(名称)</b></div>
<div class="t" style="left:993px;top:643px">解决方案文件夹的名称。</div>
<!-- SECTION:STATUS -->
<div class="a" style="left:0;top:713px;width:1366px;height:25px;background:#007acc"></div>
<div class="t" style="left:4px;top:718px;color:#fff">就绪</div>
<div class="a" style="left:499px;top:716px;width:172px;height:22px;background:#fff"></div>
<div class="a" style="left:502px;top:718px;width:1px;height:18px;background-image:linear-gradient(#999 50%,transparent 50%);background-size:1px 3px"></div>
<svg style="left:508px;top:717px" width="160" height="20" viewBox="0 0 160 20"><circle cx="10.500" cy="10" r="8" fill="#1d4f9c"/><circle cx="10.500" cy="10" r="8" fill="none" stroke="#6f8fc8" stroke-width="1"/><circle cx="15.500" cy="15" r="2.600" fill="#f0a030"/><circle cx="52.600" cy="9.300" r="7.300" fill="#a4a4a4"/><circle cx="53" cy="9" r="6" fill="#d0d0d0"/><circle cx="49.200" cy="6" r="6.700" fill="#fff"/><circle cx="71.500" cy="6.500" r="1.700" fill="#9a9a9a"/><path fill="#9a9a9a" d="M74.500,10 Q78,11 76.500,14.500 L74,16.400 Q75.500,13.500 73.800,12 Z"/><rect x="86" y="6.500" width="15" height="8.500" rx="1" fill="#d8d8d8" stroke="#9a9a9a" stroke-width="1.200"/><path stroke="#9a9a9a" stroke-width="1" d="M88,9 H99 M88,11 H99 M90,13 H97" stroke-dasharray="1.500 1"/><circle cx="114" cy="9.800" r="4.600" fill="none" stroke="#9a9a9a" stroke-width="3"/><circle cx="114" cy="9.800" r="6.800" fill="none" stroke="#9a9a9a" stroke-width="2.400" stroke-dasharray="2.600 2.740"/><rect x="130.500" y="2.600" width="6" height="10" rx="3" fill="#d0d0d0" stroke="#9a9a9a" stroke-width="1"/><path fill="none" stroke="#9a9a9a" stroke-width="1.400" d="M128,9 Q128,15 133.500,15 Q139,15 139,9 M133.500,15 V17 M129.500,17.500 H137.500"/><rect x="152" y="4.500" width="5" height="2" fill="#222"/><path fill="#222" d="M152,11.500 H157.400 L154.700,14.600 Z"/></svg>
<div class="t" style="left:510px;top:719px;width:17px;text-align:center;font-size:11px;font-weight:bold;color:#fff">拼</div>
<div class="t" style="left:533.5px;top:719px;font-size:15px;font-weight:bold;color:#909090;text-shadow:1px 1px 0 #c8c8c8">英</div>
<svg style="left:1228px;top:720px" width="10" height="11" viewBox="0 0 10 11"><path fill="none" stroke="#e6e6e6" stroke-width="1.800" d="M5,10.500 V1.600 M1,5.400 L5,1.400 L9,5.400"/></svg>
<div class="t" style="left:1247px;top:718px;color:#fff">发布</div>
<div class="a" style="left:1278px;top:723px;width:0;height:0;border-left:3.500px solid transparent;border-right:3.500px solid transparent;border-bottom:3.500px solid #fff"></div>
<svg style="left:1318px;top:715px" width="48" height="22" viewBox="0 0 48 22"><circle cx="11" cy="10.500" r="8.200" fill="#2b2b2e" stroke="#d4d4d4" stroke-width="1.300"/><circle cx="35.500" cy="10.500" r="8.500" fill="#2b2b2e" stroke="#d4d4d4" stroke-width="1.300"/><circle cx="16.700" cy="16.600" r="3.200" fill="#3a3a3a" stroke="#d8d8d8" stroke-width="1"/><path fill="#e8e8e8" d="M16.700,14.400 A2.200,2.200 0 0 1 16.700,18.800 Z"/></svg>
<div class="a" style="left:0;top:738px;width:1366px;height:8px;background:#04294a"></div>
<div class="a" style="left:792px;top:738px;width:160px;height:8px;background:#1c5d8d"></div>
<div class="a" style="left:639px;top:744px;width:16px;height:2px;background:#76b9ed"></div>
<div class="a" style="left:19px;top:745px;width:7px;height:1px;background:#e8e8e8"></div>
<div class="a" style="left:54px;top:745px;width:6px;height:1px;background:#e8e8e8"></div>
<div class="a" style="left:160px;top:745px;width:7px;height:1px;background:#1c86d8"></div>
<div class="a" style="left:483px;top:745px;width:9px;height:1px;background-image:linear-gradient(90deg,#8a9aac 50%,transparent 50%);background-size:2px 1px"></div>
<div class="a" style="left:1189px;top:738px;width:124px;height:8px;overflow:hidden"><div class="t" style="left:0;top:-2px;font-size:12.500px;color:#fff;letter-spacing:0.1px">2016-07-02&nbsp; 10:00:15</div></div>
<div class="a" style="left:1325px;top:744px;width:16px;height:2px;background:#fff"></div>
<div class="a" style="left:1361px;top:738px;width:1px;height:8px;background:#6a7f94"></div>
<div class="a" style="left:0;top:746px;width:1370px;height:4px;background:linear-gradient(#555 0,#a0a0a0 30%,#e4e4e4 60%,#f4f4f4 100%)"></div>
<div class="a" style="left:1366px;top:0;width:4px;height:750px;background:linear-gradient(90deg,#555 0,#a0a0a0 30%,#e4e4e4 60%,#f4f4f4 100%)"></div>
</body>
</html>
